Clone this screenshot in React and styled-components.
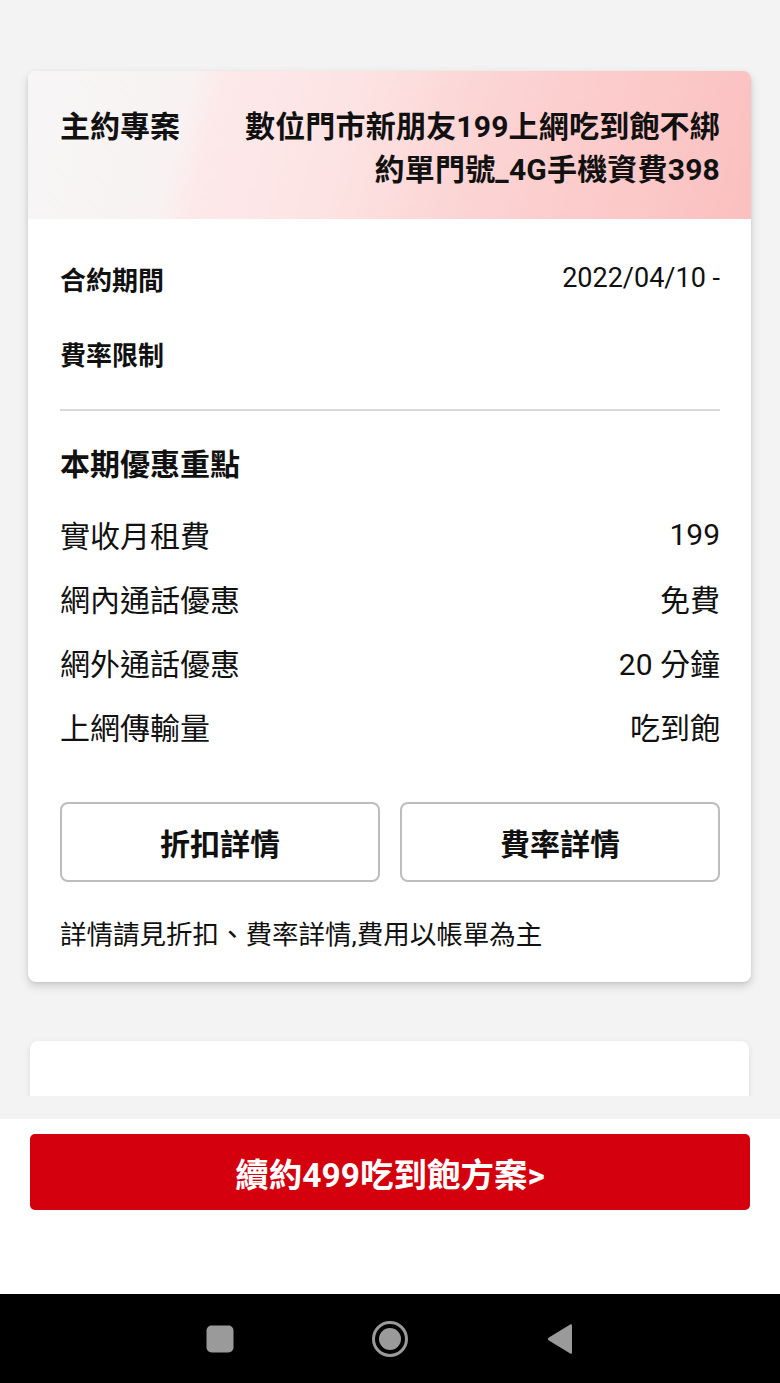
import React from "react";
import styled, { createGlobalStyle } from "styled-components";

const Global = createGlobalStyle`
  html, body { margin: 0; padding: 0; background: #f3f3f3; }
  body { font-family: "Roboto", "Noto Sans CJK TC", sans-serif; color: #111; }
  * { box-sizing: border-box; }
`;

const Screen = styled.div`
  width: 780px;
  height: 1383px;
  display: flex;
  flex-direction: column;
  background: #f3f3f3;
  overflow: hidden;
`;

const Content = styled.div`
  height: 1096px;
  overflow: hidden;
  padding: 71px 29px 0 28px;
  flex-shrink: 0;
`;

const Card = styled.div`
  background: #fff;
  border-radius: 8px;
  box-shadow: 0 4px 10px rgba(0, 0, 0, 0.16), 0 1px 3px rgba(0, 0, 0, 0.08);
  overflow: hidden;
`;

const GhostCard = styled(Card)`
  margin: 59px 2px 0 2px;
  height: 80px;
  box-shadow: 0 2px 6px rgba(0, 0, 0, 0.1);
`;

const Header = styled.div`
  height: 148px;
  padding: 34px 31px 0 32px;
  display: flex;
  justify-content: space-between;
  align-items: flex-start;
  background: linear-gradient(
    105deg,
    #f7f6f6 0%,
    #f8f2f2 22%,
    #fde9ea 26%,
    #fde3e3 44%,
    #fcd5d5 60%,
    #fccccc 76%,
    #fbc0c0 100%
  );
`;

const HeaderLabel = styled.div`
  font-size: 30px;
  font-weight: 700;
  line-height: 43px;
  white-space: nowrap;
`;

const HeaderTitle = styled.div`
  font-size: 30px;
  font-weight: 700;
  line-height: 43px;
  text-align: right;
  display: flex;
  flex-direction: column;
  align-items: flex-end;
  letter-spacing: 0.2px;
`;

const Body = styled.div`
  padding: 39px 31px 27px 32px;
  display: flex;
  flex-direction: column;
`;

const InfoRow = styled.div`
  display: flex;
  justify-content: space-between;
  align-items: center;
  height: 40px;
  margin-top: ${(p) => p.$mt || 0}px;
`;

const InfoLabel = styled.span`
  font-size: 26px;
  font-weight: 700;
`;

const InfoValue = styled.span`
  font-size: 27px;
  font-weight: 400;
`;

const Divider = styled.div`
  height: 2px;
  background: #d9d9d9;
  margin-top: 36px;
`;

const SectionTitle = styled.div`
  font-size: 30px;
  font-weight: 700;
  line-height: 40px;
  margin-top: 34px;
`;

const FeeList = styled.div`
  display: flex;
  flex-direction: column;
  gap: 24px;
  margin-top: 29px;
`;

const FeeRow = styled.div`
  display: flex;
  justify-content: space-between;
  align-items: center;
  height: 40px;
  font-size: 30px;
  font-weight: 400;
`;

const ButtonRow = styled.div`
  display: grid;
  grid-template-columns: 1fr 1fr;
  gap: 20px;
  margin-top: 56px;
`;

const OutlineButton = styled.button`
  height: 80px;
  border: 2px solid #bdbdbd;
  border-radius: 8px;
  background: #fff;
  font-family: inherit;
  font-size: 30px;
  font-weight: 700;
  color: #111;
`;

const Note = styled.div`
  font-size: 26.5px;
  line-height: 40px;
  margin-top: 33px;
`;

const Gap = styled.div`
  height: 23px;
  flex-shrink: 0;
  background: #f3f3f3;
`;

const Footer = styled.div`
  height: 175px;
  flex-shrink: 0;
  background: #fff;
  padding: 15px 30px 0 30px;
`;

const CtaButton = styled.button`
  width: 100%;
  height: 76px;
  border: none;
  border-radius: 5px;
  background: #d5000e;
  color: #fff;
  font-family: inherit;
  font-size: 33.5px;
  font-weight: 700;
`;

const NavBar = styled.div`
  flex: 1;
  background: #000;
  display: flex;
  align-items: center;
  justify-content: center;
`;

const NavSlot = styled.div`
  width: 170px;
  display: flex;
  justify-content: center;
  align-items: center;
`;

export default function App() {
  const fees = [
    ["實收月租費", "199"],
    ["網內通話優惠", "免費"],
    ["網外通話優惠", "20 分鐘"],
    ["上網傳輸量", "吃到飽"],
  ];
  return (
    <>
      <Global />
      <Screen>
        <Content>
          <Card>
            <Header>
              <HeaderLabel>主約專案</HeaderLabel>
              <HeaderTitle>
                <span>數位門市新朋友199上網吃到飽不綁</span>
                <span>約單門號_4G手機資費398</span>
              </HeaderTitle>
            </Header>
            <Body>
              <InfoRow>
                <InfoLabel>合約期間</InfoLabel>
                <InfoValue>2022/04/10 -</InfoValue>
              </InfoRow>
              <InfoRow $mt={35}>
                <InfoLabel>費率限制</InfoLabel>
                <InfoValue></InfoValue>
              </InfoRow>
              <Divider />
              <SectionTitle>本期優惠重點</SectionTitle>
              <FeeList>
                {fees.map(([k, v]) => (
                  <FeeRow key={k}>
                    <span>{k}</span>
                    <span>{v}</span>
                  </FeeRow>
                ))}
              </FeeList>
              <ButtonRow>
                <OutlineButton>折扣詳情</OutlineButton>
                <OutlineButton>費率詳情</OutlineButton>
              </ButtonRow>
              <Note>詳情請見折扣、費率詳情,費用以帳單為主</Note>
            </Body>
          </Card>
          <GhostCard />
        </Content>
        <Gap />
        <Footer>
          <CtaButton>續約499吃到飽方案&gt;</CtaButton>
        </Footer>
        <NavBar>
          <NavSlot>
            <svg width="28" height="28" viewBox="0 0 28 28">
              <rect x="0.5" y="0.5" width="27" height="27" rx="5" fill="#9a9a9a" />
            </svg>
          </NavSlot>
          <NavSlot>
            <svg width="38" height="38" viewBox="0 0 38 38">
              <circle cx="19" cy="19" r="16.5" fill="none" stroke="#9a9a9a" strokeWidth="3" />
              <circle cx="19" cy="19" r="11" fill="#9a9a9a" />
            </svg>
          </NavSlot>
          <NavSlot>
            <svg width="28" height="32" viewBox="0 0 28 32">
              <path d="M26 2.5 L26 29.5 Q26 31.5 24.2 30.5 L2.5 17.3 Q1 16 2.5 14.7 L24.2 1.5 Q26 0.5 26 2.5 Z" fill="#9a9a9a" />
            </svg>
          </NavSlot>
        </NavBar>
      </Screen>
    </>
  );
}
